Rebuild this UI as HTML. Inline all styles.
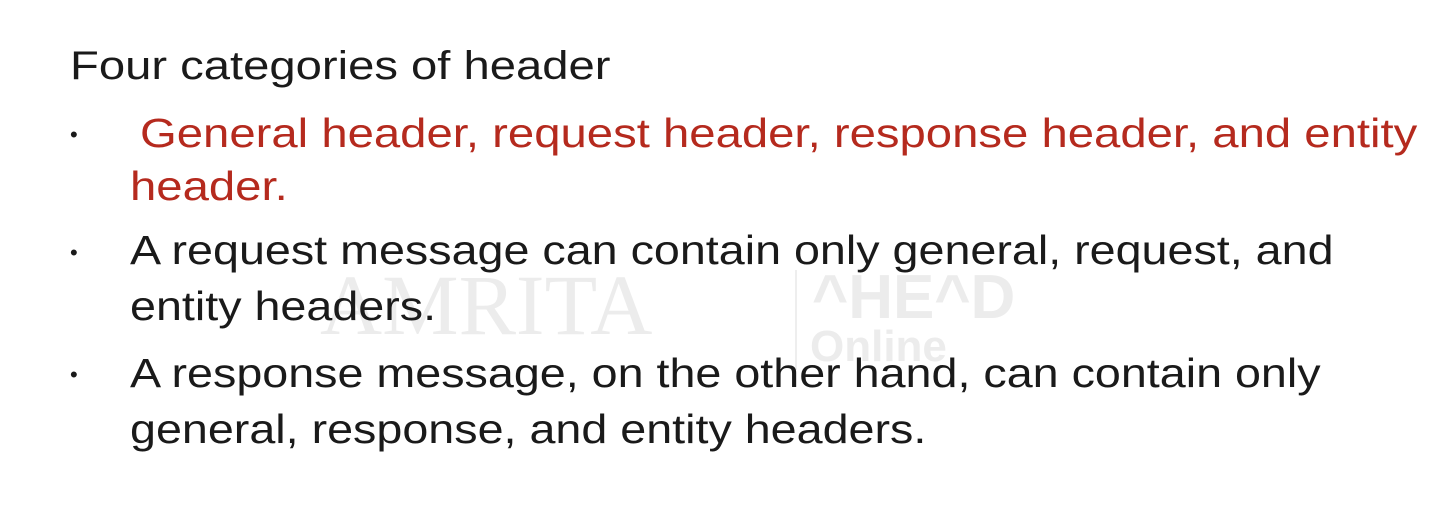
<!DOCTYPE html>
<html><head><meta charset="utf-8"><style>
html,body{margin:0;padding:0;background:#fff;}
body{width:1431px;height:523px;position:relative;overflow:hidden;font-family:"Liberation Sans",sans-serif;color:#1a1a1a;}
.t{position:absolute;white-space:nowrap;font-size:41px;line-height:1;transform:scaleX(1.138);transform-origin:0 0;}
.r{color:#b52a1e;transform:scaleX(1.153);}
.b{position:absolute;font-size:22px;left:70px;}
.wm{position:absolute;color:#ececec;font-size:86px;white-space:nowrap;font-family:"Liberation Serif",serif;}
</style></head><body>
<div class="wm" style="left:320px;top:255px;">AMRITA</div>
<div class="wm" style="left:812px;top:262px;font-family:'Liberation Sans',sans-serif;font-weight:bold;font-size:62px;">^HE^D</div>
<div class="wm" style="left:810px;top:322px;font-family:'Liberation Sans',sans-serif;font-weight:bold;font-size:44px;">Online</div>
<div style="position:absolute;left:795px;top:270px;width:2px;height:100px;background:#eee"></div>
<div class="t" style="left:70px;top:46px;font-size:40px;transform:scaleX(1.18);">Four categories of header</div>
<div class="b" style="top:122px;">•</div>
<div class="t r" style="left:140px;top:113px;">General header, request header, response header, and entity</div>
<div class="t r" style="left:130px;top:166px;">header.</div>
<div class="b" style="top:240px;">•</div>
<div class="t" style="left:130px;top:230px;">A request message can contain only general, request, and</div>
<div class="t" style="left:130px;top:286px;">entity headers.</div>
<div class="b" style="top:362px;">•</div>
<div class="t" style="left:130px;top:353px;">A response message, on the other hand, can contain only</div>
<div class="t" style="left:130px;top:409px;">general, response, and entity headers.</div>
</body></html>
